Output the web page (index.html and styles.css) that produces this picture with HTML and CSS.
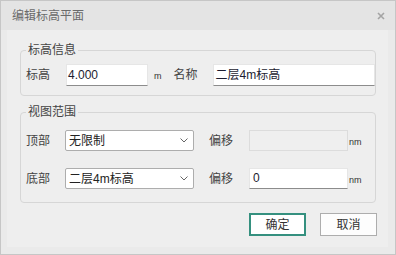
FILE: index.html
```html
<!DOCTYPE html>
<html lang="zh">
<head>
  <meta charset="UTF-8" />
  <title>编辑标高平面</title>
  <link rel="stylesheet" href="styles.css">
</head>
<body>

<div class="dialog">
  <div class="titlebar">
    <span class="title">编辑标高平面</span>
    <svg class="close" width="8" height="8" viewBox="0 0 8 8">
      <path d="M1 1 L7 7 M7 1 L1 7" stroke="#a4a4a4" stroke-width="1.6" fill="none"/>
    </svg>
  </div>

  <div class="frame">
    <div class="panel">

      <fieldset class="group group-level">
        <legend>标高信息</legend>
        <div class="row">
          <span class="lbl">标高</span>
          <div class="field field-elev">4.000</div>
          <span class="unit">m</span>
          <span class="lbl lbl-name">名称</span>
          <div class="field field-name">二层4m标高</div>
        </div>
      </fieldset>

      <fieldset class="group group-range">
        <legend>视图范围</legend>
        <div class="row">
          <span class="lbl lbl-short">顶部</span>
          <div class="select">
            <span>无限制</span>
            <svg width="8" height="5" viewBox="0 0 8 5"><path d="M0.5 0.5 L4 4 L7.5 0.5" stroke="#666" fill="none"/></svg>
          </div>
          <span class="lbl lbl-offset">偏移</span>
          <div class="field field-offset disabled"></div>
          <span class="unit">nm</span>
        </div>
        <div class="row row-bottom">
          <span class="lbl lbl-short">底部</span>
          <div class="select">
            <span>二层4m标高</span>
            <svg width="8" height="5" viewBox="0 0 8 5"><path d="M0.5 0.5 L4 4 L7.5 0.5" stroke="#666" fill="none"/></svg>
          </div>
          <span class="lbl lbl-offset">偏移</span>
          <div class="field field-offset">0</div>
          <span class="unit">nm</span>
        </div>
      </fieldset>

      <div class="actions">
        <button class="btn btn-ok">确定</button>
        <button class="btn">取消</button>
      </div>

    </div>
  </div>
</div>

</body>
</html>
```

FILE: styles.css
```css
* {
  box-sizing: border-box;
  margin: 0;
  padding: 0;
}

body {
  font-family: "Liberation Sans", "Noto Sans CJK SC", sans-serif;
  font-size: 12px;
  color: #444;
  background: #ffffff;
}

.dialog {
  width: 396px;
  height: 255px;
  border: 1px solid #c6c6c6;
  background: #eaeaea;
  display: flex;
  flex-direction: column;
}

.titlebar {
  height: 29px;
  background: #e4e4e4;
  display: flex;
  align-items: center;
  justify-content: space-between;
  padding: 1px 11px 0 11px;
}

.title {
  color: #6a6a6a;
  font-size: 12px;
  line-height: 16px;
}

.close {
  margin-right: -1px;
}

.frame {
  flex: 1;
  padding: 0 7px 7px 6px;
}

.panel {
  height: 100%;
  background: #eeeeee;
  padding: 12px 12px 0 13px;
}

.group {
  border: 1px solid #d6d6d6;
  border-radius: 4px;
  padding: 6px 0 9px 5px;
  min-width: 0;
}

.group legend {
  padding: 0 2px;
  line-height: 16px;
  font-size: 12px;
  color: #444;
}

.group-range {
  margin-top: 8px;
  padding-top: 10px;
  padding-bottom: 13px;
}

.row {
  display: flex;
  align-items: center;
}

.row-bottom {
  margin-top: 17px;
}

.lbl {
  width: 40px;
  line-height: 16px;
  color: #444;
}

.lbl-short {
  width: 39px;
}

.lbl-name {
  width: 39px;
  margin-left: 12px;
}

.lbl-offset {
  margin-left: 15px;
}

.field {
  height: 22px;
  background: #ffffff;
  border: 1px solid #e6e6e6;
  border-bottom-color: #8c8c8c;
  color: #1c1c30;
  font-size: 12px;
  line-height: 20px;
  padding-left: 1px;
}

.field-elev {
  width: 82px;
}

.field-name {
  flex: 1;
  padding-left: 2px;
}

.field-offset {
  width: 99px;
  height: 21px;
  line-height: 19px;
  padding-left: 3px;
}

.field.disabled {
  background: #efefef;
  border: 1px solid #dcdcdc;
}

.unit {
  font-size: 9px;
  color: #333;
  line-height: 12px;
  margin-left: 6px;
  margin-top: 2px;
}

.field-offset + .unit {
  margin-left: 1px;
}

.select {
  width: 129px;
  height: 21px;
  background: #ffffff;
  border: 1px solid #adadad;
  border-radius: 2px;
  display: flex;
  align-items: center;
  justify-content: space-between;
  padding: 0 5px 0 3px;
  color: #222;
  line-height: 16px;
}

.actions {
  display: flex;
  justify-content: flex-end;
  gap: 14px;
  margin-top: 10px;
  margin-right: -1px;
}

.btn {
  width: 57px;
  height: 23px;
  background: #fdfdfd;
  border: 1px solid #adadad;
  font-family: inherit;
  font-size: 12px;
  color: #333;
  line-height: 16px;
}

.btn-ok {
  background: #ffffff;
  border: 2px solid #35907f;
}
```
